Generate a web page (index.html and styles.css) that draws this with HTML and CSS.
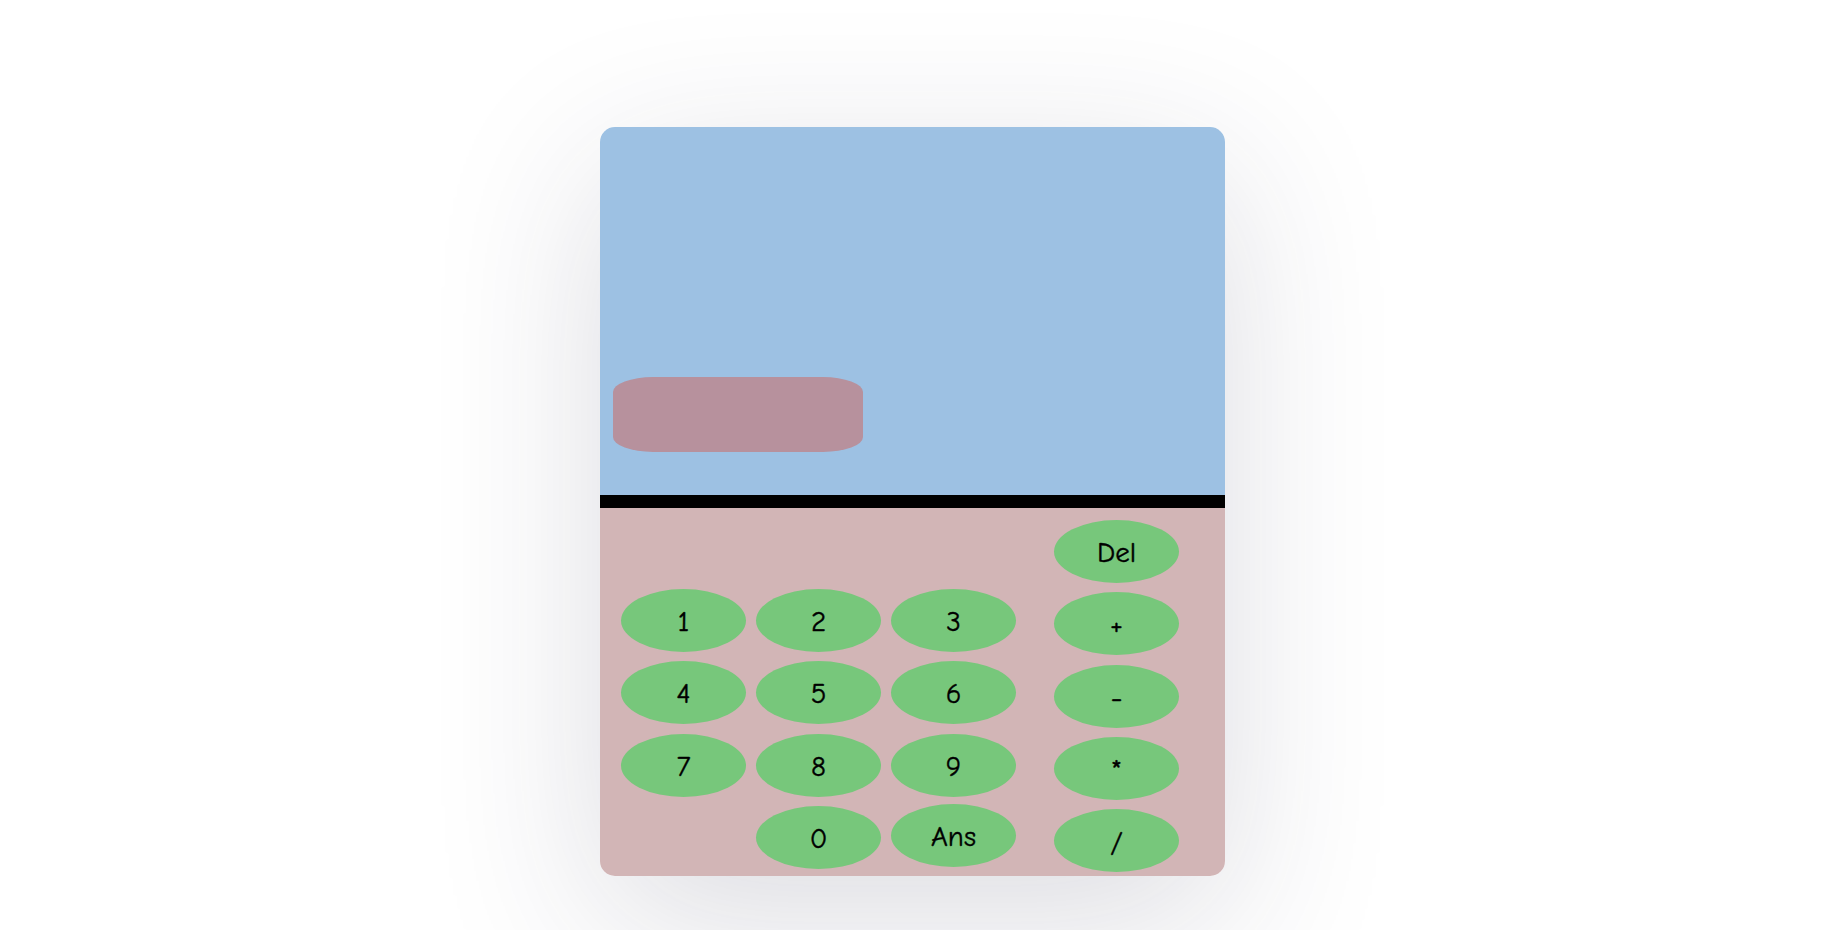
FILE: index.html
```html
<!DOCTYPE html>
<html lang="en">
<head>
<meta charset="utf-8">
<title>Calculator</title>
<link rel="stylesheet" href="styles.css">
</head>
<body>
<div class="calc">
  <div class="display">
    <div class="screen"></div>
  </div>
  <div class="keypad">
    <div class="nums">
      <button class="key">1</button>
      <button class="key">2</button>
      <button class="key">3</button>
      <button class="key">4</button>
      <button class="key">5</button>
      <button class="key">6</button>
      <button class="key">7</button>
      <button class="key">8</button>
      <button class="key">9</button>
      <button class="key key-zero">0</button>
      <button class="key key-ans">Ans</button>
    </div>
    <div class="ops">
      <button class="key">Del</button>
      <button class="key">+</button>
      <button class="key">-</button>
      <button class="key">*</button>
      <button class="key">/</button>
    </div>
  </div>
</div>
</body>
</html>
```

FILE: styles.css
```css
html, body {
  margin: 0;
  padding: 0;
  background: #ffffff;
}

body {
  height: 930px;
  overflow: hidden;
  font-family: "Comic Sans MS", "Comic Neue", cursive;
}

.calc {
  width: 625px;
  margin: 127px 0 0 calc(50% - 316px);
  border-radius: 15px;
  overflow: hidden;
  box-shadow: 0 45px 170px rgba(40, 40, 70, 0.16);
}

.display {
  background: #9dc1e3;
  border-bottom: 13px solid #000;
  display: flex;
  flex-direction: column;
  justify-content: flex-end;
  padding: 0 0 43px 13px;
  height: 325px;
}

.screen {
  width: 250px;
  height: 75px;
  background: #b7919d;
  border-radius: 40px / 15px;
}

.keypad {
  height: 368px;
  background: #d2b5b6;
  display: flex;
  padding-left: 21px;
}

.nums {
  display: grid;
  grid-template-columns: repeat(3, 125px);
  grid-auto-rows: 63px;
  column-gap: 10px;
  row-gap: 9.3px;
  padding-top: 81px;
  align-content: start;
}

.key-zero {
  grid-column-start: 2;
}

.key-ans {
  position: relative;
  top: -2px;
}

.ops {
  display: flex;
  flex-direction: column;
  gap: 9.3px;
  padding-top: 12px;
  margin-left: 38px;
}

.key {
  width: 125px;
  height: 63px;
  border: none;
  border-radius: 50%;
  background: #77c77b;
  color: #000;
  font-family: "Comic Sans MS", "Comic Neue", cursive;
  font-size: 29px;
  font-weight: 400;
  -webkit-text-stroke: 0.4px #000;
  padding: 2px 0 0;
  margin: 0;
  cursor: pointer;
}
```
